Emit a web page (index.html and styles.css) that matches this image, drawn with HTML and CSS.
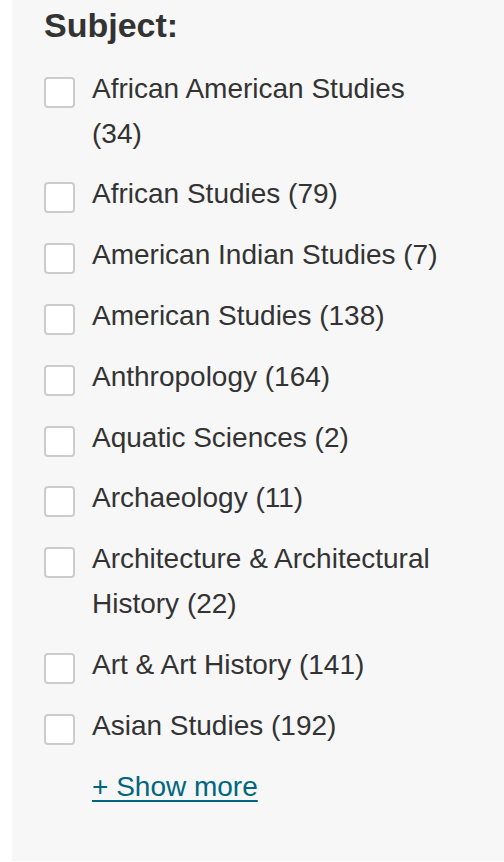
FILE: index.html
```html
<!DOCTYPE html>
<html lang="en">
<head>
    <meta charset="UTF-8">
    <meta name="viewport" content="width=device-width, initial-scale=1.0">
    <title>Subject filter</title>
    <link rel="stylesheet" href="styles.css">
</head>
<body>
    <div class="filter-panel">
        <h2 class="filter-title">Subject:</h2>
        <ul class="filter-list">
            <li class="filter-item"><span class="checkbox"></span><span class="filter-label">African American Studies (34)</span></li>
            <li class="filter-item"><span class="checkbox"></span><span class="filter-label">African Studies (79)</span></li>
            <li class="filter-item"><span class="checkbox"></span><span class="filter-label">American Indian Studies (7)</span></li>
            <li class="filter-item"><span class="checkbox"></span><span class="filter-label">American Studies (138)</span></li>
            <li class="filter-item"><span class="checkbox"></span><span class="filter-label">Anthropology (164)</span></li>
            <li class="filter-item"><span class="checkbox"></span><span class="filter-label">Aquatic Sciences (2)</span></li>
            <li class="filter-item"><span class="checkbox"></span><span class="filter-label">Archaeology (11)</span></li>
            <li class="filter-item"><span class="checkbox"></span><span class="filter-label">Architecture &amp; Architectural History (22)</span></li>
            <li class="filter-item"><span class="checkbox"></span><span class="filter-label">Art &amp; Art History (141)</span></li>
            <li class="filter-item"><span class="checkbox"></span><span class="filter-label">Asian Studies (192)</span></li>
        </ul>
        <a class="show-more" href="#">+ Show more</a>
    </div>
</body>
</html>
```

FILE: styles.css
```css
* {
    margin: 0;
    padding: 0;
    box-sizing: border-box;
}

body {
    font-family: "Liberation Sans", Arial, Helvetica, sans-serif;
    background: #ffffff;
    color: #333333;
}

.filter-panel {
    margin-left: 12px;
    height: 861px;
    background: #f7f7f7;
    padding: 5px 60px 0 32px;
}

.filter-title {
    font-size: 34px;
    font-weight: bold;
    line-height: 1.2;
    color: #333333;
    margin-bottom: 21px;
}

.filter-list {
    list-style: none;
}

.filter-item {
    display: flex;
    align-items: flex-start;
    font-size: 28px;
    line-height: 1.6;
    margin-bottom: 16px;
}

.checkbox {
    flex: none;
    width: 31px;
    height: 31px;
    margin-top: 10px;
    background: #ffffff;
    border: 2px solid #cccccc;
    border-radius: 4px;
}

.filter-label {
    margin-left: 17px;
}

.show-more {
    display: inline-block;
    margin-left: 48px;
    margin-top: 1px;
    font-size: 28px;
    line-height: 1.6;
    color: #00667f;
    text-decoration: underline;
    text-decoration-thickness: 2px;
    text-underline-offset: 4px;
}
```
